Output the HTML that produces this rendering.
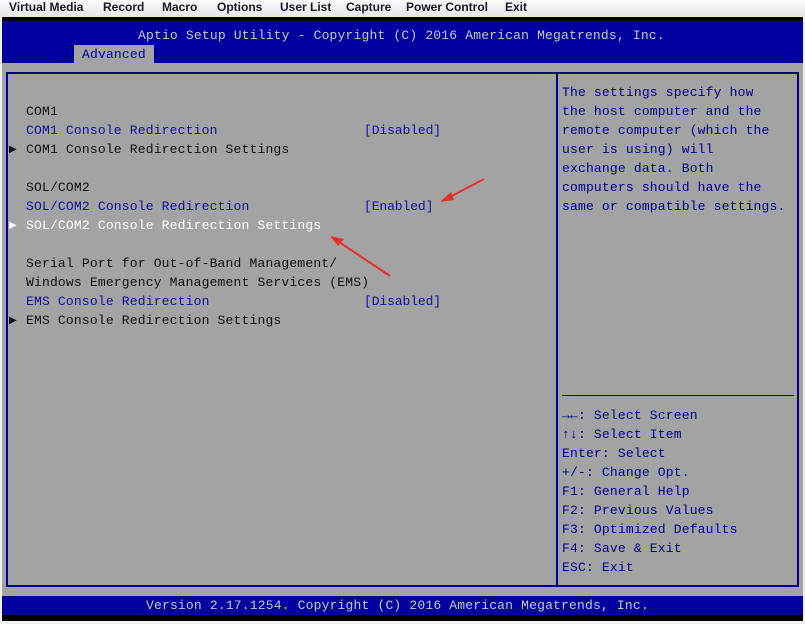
<!DOCTYPE html>
<html><head><meta charset="utf-8"><style>
*{margin:0;padding:0;box-sizing:border-box}
html,body{width:805px;height:624px;overflow:hidden;background:#f0f0f0}
.menu{position:absolute;left:0;top:0;width:805px;height:17px;background:linear-gradient(#fafafa,#e6e6e6);font:bold 12px "Liberation Sans",Arial,sans-serif;color:#1a1a2a}
.menu span{position:absolute;top:0;line-height:14px}
.scr{position:absolute;left:2px;top:17px;width:801px;height:604px;background:#000}
.m{font-family:"Liberation Mono",monospace;font-size:13px;line-height:19px;white-space:pre;position:absolute;letter-spacing:0.18px}
.hdr{position:absolute;left:2px;top:21px;width:801px;height:42px;background:#0000a0}
.tab{position:absolute;left:74px;top:45px;width:80px;height:18px;background:#a3a3a3}
.body{position:absolute;left:2px;top:63px;width:801px;height:533px;background:#a3a3a3}
.box{position:absolute;left:6px;top:72px;width:793px;height:515px;border:2px solid #00008c}
.div{position:absolute;left:556px;top:72px;width:2px;height:515px;background:#00008c}
.hr{position:absolute;left:562px;top:395px;width:232px;height:1px;background:#00008c}
.foot{position:absolute;left:2px;top:596px;width:801px;height:19px;background:#0000a0}
.k{color:#111}.b{color:#10109a}.w{color:#fff}.g{color:#c8c8c8}.hb{color:#00008c}
.ar{position:absolute;font-size:10px;line-height:19px;font-family:"DejaVu Sans",sans-serif}
</style></head><body>
<div class="menu">
<span style="left:9px">Virtual Media</span><span style="left:103px">Record</span><span style="left:162px">Macro</span><span style="left:217px">Options</span><span style="left:280px">User List</span><span style="left:346px">Capture</span><span style="left:406px">Power Control</span><span style="left:505px">Exit</span>
</div>
<div class="scr"></div>
<div class="hdr"></div>
<div class="m g" style="left:138px;top:26px">Aptio Setup Utility - Copyright (C) 2016 American Megatrends, Inc.</div>
<div class="tab"></div>
<div class="m hb" style="left:82px;top:45px;color:#0000a0">Advanced</div>
<div class="body"></div>
<div class="box"></div>
<div class="div"></div>
<div class="hr"></div>
<div class="m k" style="left:26px;top:102px">COM1</div>
<div class="m b" style="left:26px;top:121px">COM1 Console Redirection</div>
<div class="m b" style="left:364px;top:121px;letter-spacing:-0.1px">[Disabled]</div>
<div class="ar k" style="left:9px;top:140px">&#9654;</div>
<div class="m k" style="left:26px;top:140px">COM1 Console Redirection Settings</div>
<div class="m k" style="left:26px;top:178px">SOL/COM2</div>
<div class="m b" style="left:26px;top:197px">SOL/COM2 Console Redirection</div>
<div class="m b" style="left:364px;top:197px;letter-spacing:-0.1px">[Enabled]</div>
<div class="ar w" style="left:9px;top:216px">&#9654;</div>
<div class="m w" style="left:26px;top:216px">SOL/COM2 Console Redirection Settings</div>
<div class="m k" style="left:26px;top:254px">Serial Port for Out-of-Band Management/</div>
<div class="m k" style="left:26px;top:273px">Windows Emergency Management Services (EMS)</div>
<div class="m b" style="left:26px;top:292px">EMS Console Redirection</div>
<div class="m b" style="left:364px;top:292px;letter-spacing:-0.1px">[Disabled]</div>
<div class="ar k" style="left:9px;top:311px">&#9654;</div>
<div class="m k" style="left:26px;top:311px">EMS Console Redirection Settings</div>
<div class="m hb" style="left:562px;top:83px">The settings specify how
the host computer and the
remote computer (which the
user is using) will
exchange data. Both
computers should have the
same or compatible settings.</div>
<div class="m hb" style="left:562px;top:406px"><b>&#8594;&#8592;</b>: Select Screen
<b>&#8593;&#8595;</b>: Select Item
Enter: Select
+/-: Change Opt.
F1: General Help
F2: Previous Values
F3: Optimized Defaults
F4: Save &amp; Exit
ESC: Exit</div>
<div class="foot"></div>
<div class="m g" style="left:146px;top:596px">Version 2.17.1254. Copyright (C) 2016 American Megatrends, Inc.</div>
<svg style="position:absolute;left:0;top:0" width="805" height="624">
<g stroke="#e8302a" stroke-width="2" fill="#e8302a">
<line x1="484" y1="179" x2="446" y2="199"/>
<polygon points="440,202 451,192 454,200" stroke="none"/>
<line x1="390" y1="276" x2="336" y2="240"/>
<polygon points="330,236 344,239 338,246" stroke="none"/>
</g>
</svg>
</body></html>
